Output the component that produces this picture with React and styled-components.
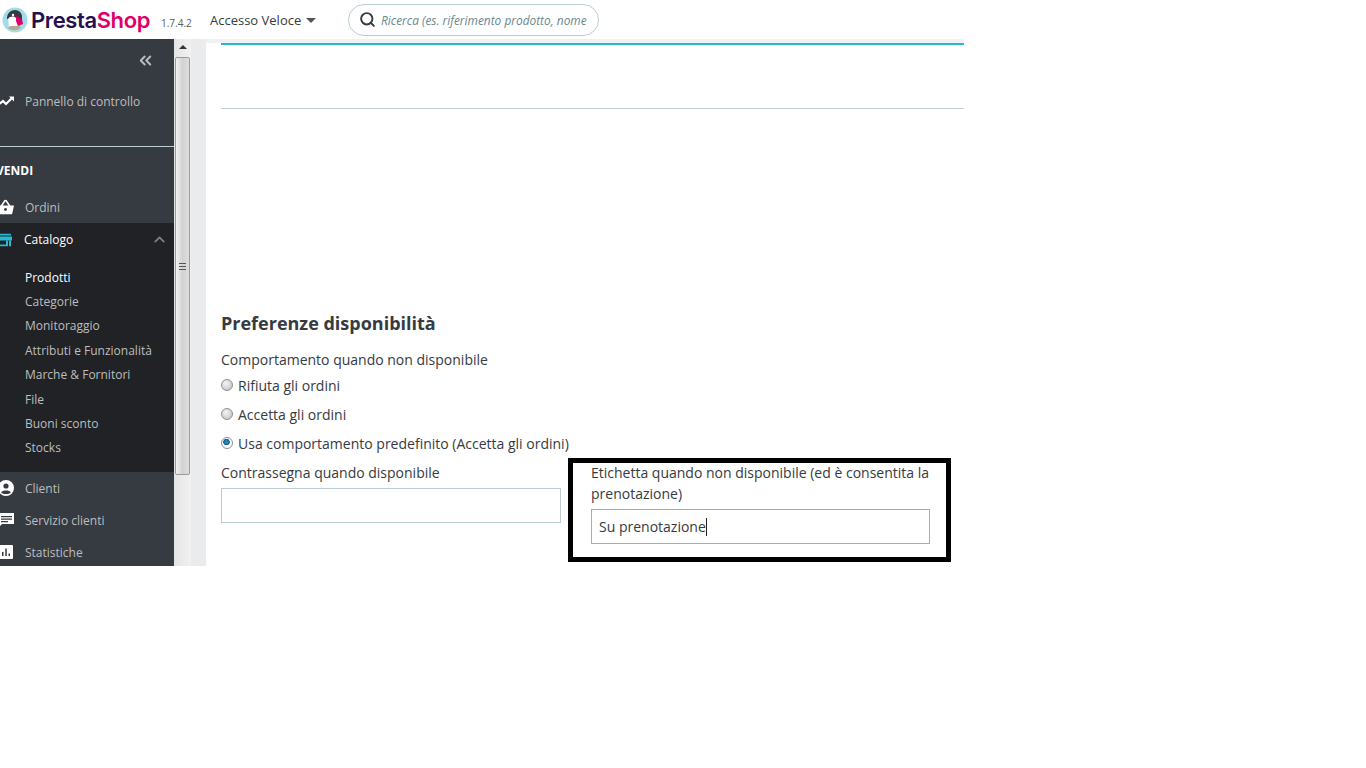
import React from 'react';
import styled, { createGlobalStyle } from 'styled-components';
import { ChevronsLeft, ChevronUp, Search } from 'lucide-react';

const GlobalStyle = createGlobalStyle`
  html, body {
    margin: 0;
    background: #fff;
  }
  *, *::before, *::after {
    box-sizing: border-box;
  }
  body {
    font-family: "Open Sans", "Liberation Sans", sans-serif;
    color: #363a41;
  }
`;

const catalogLinks = [
  'Prodotti',
  'Categorie',
  'Monitoraggio',
  'Attributi e Funzionalità',
  'Marche & Fornitori',
  'File',
  'Buoni sconto',
  'Stocks',
];

function Puffin() {
  return (
    <svg width="26" height="26" viewBox="0 0 26 26">
      <circle cx="13" cy="13" r="12.5" fill="#a4dbe8" />
      <path d="M5 11c0-5 4-8 8-8s7 3 7 7v2H5z" fill="#363a41" />
      <path d="M6 12c2-3 6-3 8-1l2 8c-1 4-7 5-9 1z" fill="#fff" />
      <path d="M14 9l6 3 1 5-5 2-2-5z" fill="#df0067" />
      <path d="M6 21c3 3 9 3 13 0l-2-2H8z" fill="#b9a88f" />
      <circle cx="11" cy="8" r="1.2" fill="#fff" />
    </svg>
  );
}

function TrendIcon() {
  return (
    <svg width="16" height="12" viewBox="0 0 16 12">
      <path d="M0 9l4-3 3 3 6-6" fill="none" stroke="#fff" strokeWidth="2.2" />
      <path d="M10 1.5h5v5z" fill="#fff" />
    </svg>
  );
}

function BasketIcon() {
  return (
    <svg width="17" height="15" viewBox="0 0 17 15">
      <path d="M0 6h17l-2 9H2z" fill="#fff" />
      <path d="M4 7l4-6h1l4 6" fill="none" stroke="#fff" strokeWidth="1.6" />
      <circle cx="8.5" cy="10" r="1.4" fill="#363a41" />
    </svg>
  );
}

function StoreIcon() {
  return (
    <svg width="15" height="13" viewBox="0 0 15 13">
      <path d="M1 0h13v2H1zM0 3h15v4H0z" fill="#25b9d7" />
      <path d="M1 7h2v6H1zM12 7h2v6h-2zM1 11h8V7h2v6H1z" fill="#25b9d7" />
    </svg>
  );
}

function PersonIcon() {
  return (
    <svg width="16" height="16" viewBox="0 0 16 16">
      <circle cx="8" cy="8" r="8" fill="#fff" />
      <circle cx="8" cy="6" r="2.6" fill="#363a41" />
      <path d="M3.2 12.5c1-2.6 8.600-2.600 9.600 0C11 14.500 5 14.500 3.200 12.500z" fill="#363a41" />
    </svg>
  );
}

function ChatIcon() {
  return (
    <svg width="15" height="14" viewBox="0 0 15 14">
      <path d="M0 0h15v11H3l-3 3z" fill="#fff" />
      <path d="M2 3h11v1.300H2zM2 5.500h11v1.300H2zM2 8h7v1.300H2z" fill="#363a41" />
    </svg>
  );
}

function ChartIcon() {
  return (
    <svg width="14" height="14" viewBox="0 0 14 14">
      <rect width="14" height="14" rx="1" fill="#fff" />
      <path d="M3 7h1.500v4H3zM6.300 3.500h1.500V11H6.300zM9.500 8.500H11V11H9.500z" fill="#363a41" />
    </svg>
  );
}

const Page = styled.div`
  width: 964px;
  height: 566px;
  display: flex;
  flex-direction: column;
  overflow: hidden;
`;

const Header = styled.header`
  height: 39px;
  flex: none;
  display: flex;
  align-items: center;
  background: #fff;
`;

const Brand = styled.div`
  display: flex;
  align-items: center;
  width: 210px;
  padding-left: 2px;
`;

const Wordmark = styled.span`
  margin-left: 3px;
  font: 600 22px/1 "Inter", "Open Sans", sans-serif;
  letter-spacing: -0.4px;
  color: #25104f;
  b {
    font-weight: 600;
    color: #df0067;
  }
`;

const Version = styled.span`
  margin-left: 11px;
  padding-top: 6px;
  font-size: 10px;
  color: #555c63;
`;

const QuickAccess = styled.div`
  width: 138px;
  display: flex;
  align-items: center;
  gap: 5px;
  font-size: 13px;
  color: #363a41;
  &::after {
    content: '';
    border: 5px solid transparent;
    border-top: 5px solid #555;
    border-bottom: 0;
    margin-top: 2px;
  }
`;

const SearchBox = styled.div`
  width: 251px;
  height: 32px;
  display: flex;
  align-items: center;
  gap: 5px;
  padding-left: 10px;
  border: 1px solid #bbcdd2;
  border-radius: 16px;
  color: #363a41;
  overflow: hidden;
  white-space: nowrap;
  span {
    font-size: 11.9px;
    font-style: italic;
    color: #6c868e;
  }
`;

const Main = styled.div`
  flex: 1;
  min-height: 0;
  display: flex;
`;

const Sidebar = styled.nav`
  width: 174px;
  flex: none;
  background: #363a41;
  overflow: hidden;
  font-size: 12px;
`;

const CollapseRow = styled.div`
  height: 43px;
  display: flex;
  align-items: center;
  justify-content: flex-end;
  padding-right: 19px;
  color: #bebebe;
`;

const NavItem = styled.div`
  height: 32px;
  display: flex;
  align-items: center;
  padding-left: 25px;
  position: relative;
  color: ${(p) => (p.$active ? '#fff' : '#bebebe')};
`;

const NavIcon = styled.span`
  position: absolute;
  left: ${(p) => p.$left || 0}px;
  top: 50%;
  transform: translateY(-50%);
  display: flex;
`;

const Dashboard = styled(NavItem)`
  height: 38px;
  margin-bottom: 26px;
`;

const Divider = styled.div`
  height: 1px;
  background: #bbcdd2;
`;

const SectionTitle = styled.div`
  height: 40px;
  margin-top: 3px;
  margin-bottom: 1px;
  margin-left: -4px;
  display: flex;
  align-items: center;
  font-weight: 700;
  color: #fff;
`;

const CatalogBlock = styled.div`
  height: 249px;
  background: #202226;
`;

const CatalogHead = styled(NavItem)`
  height: 33px;
  padding-left: 24px;
  justify-content: space-between;
  padding-right: 6px;
  margin-bottom: 9px;
  color: #fff;
  svg.chevron {
    color: #6c868e;
  }
`;

const SubLink = styled.div`
  height: 24.400px;
  padding-left: 25px;
  display: flex;
  align-items: center;
  color: ${(p) => (p.$active ? '#fff' : '#bebebe')};
`;

const ScrollBar = styled.div`
  width: 17px;
  flex: none;
  display: flex;
  flex-direction: column;
  align-items: center;
  background: linear-gradient(90deg, #e4e4e4, #f1f1f1);
`;

const ScrollArrow = styled.div`
  height: 18px;
  flex: none;
  padding-top: 6px;
  &::before {
    content: '';
    display: block;
    border: 4px solid transparent;
    border-bottom: 4px solid #333;
    border-top: 0;
  }
`;

const ScrollThumb = styled.div`
  width: 15px;
  height: 418px;
  display: flex;
  align-items: center;
  justify-content: center;
  border: 1px solid #9a9a9a;
  border-radius: 2px;
  background: linear-gradient(90deg, #f2f2f2, #d2d2d2 50%, #dedede);
  &::before {
    content: '';
    width: 7px;
    height: 7px;
    background: repeating-linear-gradient(#555 0 1px, transparent 1px 3px);
  }
`;

const Gutter = styled.div`
  width: 15px;
  flex: none;
  background: #eaebec;
`;

const Content = styled.main`
  flex: 1;
  min-width: 0;
  padding: 4px 0 0 15px;
  background: linear-gradient(#eff1f2 4px, #fff 4px);
`;

const TopRule = styled.div`
  height: 2px;
  background: #25b9d7;
`;

const ThinRule = styled.div`
  height: 1px;
  margin-top: 63px;
  background: #bbcdd2;
`;

const Heading = styled.h2`
  margin: 203px 0 0;
  font-size: 18px;
  line-height: 22px;
  font-weight: 700;
  color: #363a41;
`;

const FormLabel = styled.div`
  margin-top: 16px;
  font-size: 14px;
  line-height: 20px;
`;

const RadioRow = styled.label`
  display: flex;
  align-items: center;
  gap: 5px;
  height: 20px;
  margin-top: ${(p) => p.$gap}px;
  font-size: 14px;
`;

const RadioDot = styled.span`
  width: 12px;
  height: 12px;
  border-radius: 50%;
  border: 1px solid #8f8f8f;
  background: ${(p) =>
    p.$checked
      ? 'radial-gradient(circle at 45% 40%, #3f9bd0 0, #0a5f96 3px, #fff 3.500px)'
      : 'radial-gradient(circle at 40% 35%, #f4f4f4, #bcbcbc)'};
`;

const Columns = styled.div`
  display: flex;
  width: 709px;
  margin-top: 9px;
  justify-content: space-between;
`;

const FieldColumn = styled.div`
  width: 340px;
  font-size: 14px;
  line-height: 21px;
`;

const RightColumn = styled(FieldColumn)`
  width: 339px;
  position: relative;
  &::before {
    content: '';
    position: absolute;
    left: -23px;
    right: -21px;
    top: -4px;
    height: 104px;
    border: 5px solid #000;
    pointer-events: none;
  }
`;

const TextField = styled.div`
  height: 35px;
  margin-top: 5px;
  padding-left: 7px;
  display: flex;
  align-items: center;
  border: 1px solid ${(p) => (p.$focused ? '#5cc8e4' : '#bbcdd2')};
  font-size: 14px;
`;

const Caret = styled.span`
  width: 1px;
  height: 18px;
  background: #222;
`;

export default function App() {
  return (
    <>
      <GlobalStyle />
      <Page>
        <Header>
          <Brand>
            <Puffin />
            <Wordmark>
              Presta<b>Shop</b>
            </Wordmark>
            <Version>1.7.4.2</Version>
          </Brand>
          <QuickAccess>Accesso Veloce</QuickAccess>
          <SearchBox>
            <Search size={17} strokeWidth={2.7} />
            <span>Ricerca (es. riferimento prodotto, nome</span>
          </SearchBox>
        </Header>
        <Main>
          <Sidebar>
            <CollapseRow>
              <ChevronsLeft size={19} strokeWidth={2.4} />
            </CollapseRow>
            <Dashboard>
              <NavIcon $left={-1}>
                <TrendIcon />
              </NavIcon>
              Pannello di controllo
            </Dashboard>
            <Divider />
            <SectionTitle>VENDI</SectionTitle>
            <NavItem>
              <NavIcon $left={-3}>
                <BasketIcon />
              </NavIcon>
              Ordini
            </NavItem>
            <CatalogBlock>
              <CatalogHead>
                <NavIcon $left={-3}>
                  <StoreIcon />
                </NavIcon>
                Catalogo
                <ChevronUp className="chevron" size={17} strokeWidth={2.5} />
              </CatalogHead>
              {catalogLinks.map((link) => (
                <SubLink key={link} $active={link === 'Prodotti'}>
                  {link}
                </SubLink>
              ))}
            </CatalogBlock>
            <NavItem>
              <NavIcon $left={-2}>
                <PersonIcon />
              </NavIcon>
              Clienti
            </NavItem>
            <NavItem>
              <NavIcon $left={-1}>
                <ChatIcon />
              </NavIcon>
              Servizio clienti
            </NavItem>
            <NavItem>
              <NavIcon $left={-1}>
                <ChartIcon />
              </NavIcon>
              Statistiche
            </NavItem>
          </Sidebar>
          <ScrollBar>
            <ScrollArrow />
            <ScrollThumb />
          </ScrollBar>
          <Gutter />
          <Content>
            <TopRule />
            <ThinRule />
            <Heading>Preferenze disponibilità</Heading>
            <FormLabel>Comportamento quando non disponibile</FormLabel>
            <RadioRow $gap={5}>
              <RadioDot />
              Rifiuta gli ordini
            </RadioRow>
            <RadioRow $gap={9}>
              <RadioDot />
              Accetta gli ordini
            </RadioRow>
            <RadioRow $gap={9}>
              <RadioDot $checked />
              Usa comportamento predefinito (Accetta gli ordini)
            </RadioRow>
            <Columns>
              <FieldColumn>
                Contrassegna quando disponibile
                <TextField />
              </FieldColumn>
              <RightColumn>
                Etichetta quando non disponibile (ed è consentita la prenotazione)
                <TextField $focused>
                  Su prenotazione
                  <Caret />
                </TextField>
              </RightColumn>
            </Columns>
          </Content>
        </Main>
      </Page>
    </>
  );
}
